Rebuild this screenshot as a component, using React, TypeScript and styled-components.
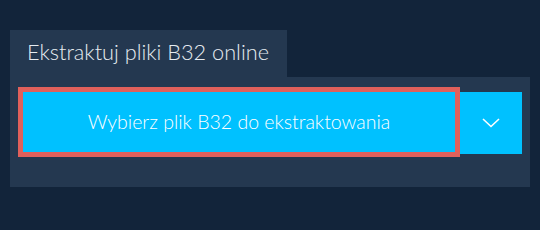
import React from "react";
import styled, { createGlobalStyle } from "styled-components";

const Global = createGlobalStyle`
  html, body { margin: 0; padding: 0; background: #12243a; }
  body { font-family: Lato, "Open Sans", sans-serif; }
`;

const Page = styled.div`
  padding: 30px 10px 0 10px;
  width: 540px;
  box-sizing: border-box;
`;

const Tab = styled.div`
  display: inline-flex;
  align-items: center;
  height: 47px;
  padding: 0 18px 4px 17px;
  box-sizing: border-box;
  background: #243850;
  color: #e6ecf1;
  font-size: 21.7px;
  font-weight: 300;
  white-space: nowrap;
`;

const Panel = styled.div`
  background: #243850;
  padding: 10px 8px 30px 8px;
  display: flex;
  align-items: flex-start;
`;

const MainButton = styled.button`
  flex: 1;
  height: 70px;
  box-sizing: border-box;
  border: 5px solid #e0605b;
  background: #00c1ff;
  color: #ffffff;
  font-family: Lato, "Open Sans", sans-serif;
  font-size: 19.5px;
  font-weight: 300;
  display: flex;
  align-items: center;
  justify-content: center;
  padding: 0 0 2px 0;
  cursor: pointer;
`;

const DropButton = styled.button`
  width: 62px;
  height: 62px;
  margin-top: 5px;
  border: none;
  background: #00c1ff;
  display: flex;
  align-items: center;
  justify-content: center;
  padding: 0;
  cursor: pointer;
`;

export default function App() {
  return (
    <>
      <Global />
      <Page>
        <Tab>Ekstraktuj pliki B32 online</Tab>
        <Panel>
          <MainButton>Wybierz plik B32 do ekstraktowania</MainButton>
          <DropButton aria-label="więcej opcji">
            <svg width="18" height="10" viewBox="0 0 18 10">
              <path d="M1 1 L9 8.5 L17 1" fill="none" stroke="#ffffff" strokeWidth="1.6" />
            </svg>
          </DropButton>
        </Panel>
      </Page>
    </>
  );
}
